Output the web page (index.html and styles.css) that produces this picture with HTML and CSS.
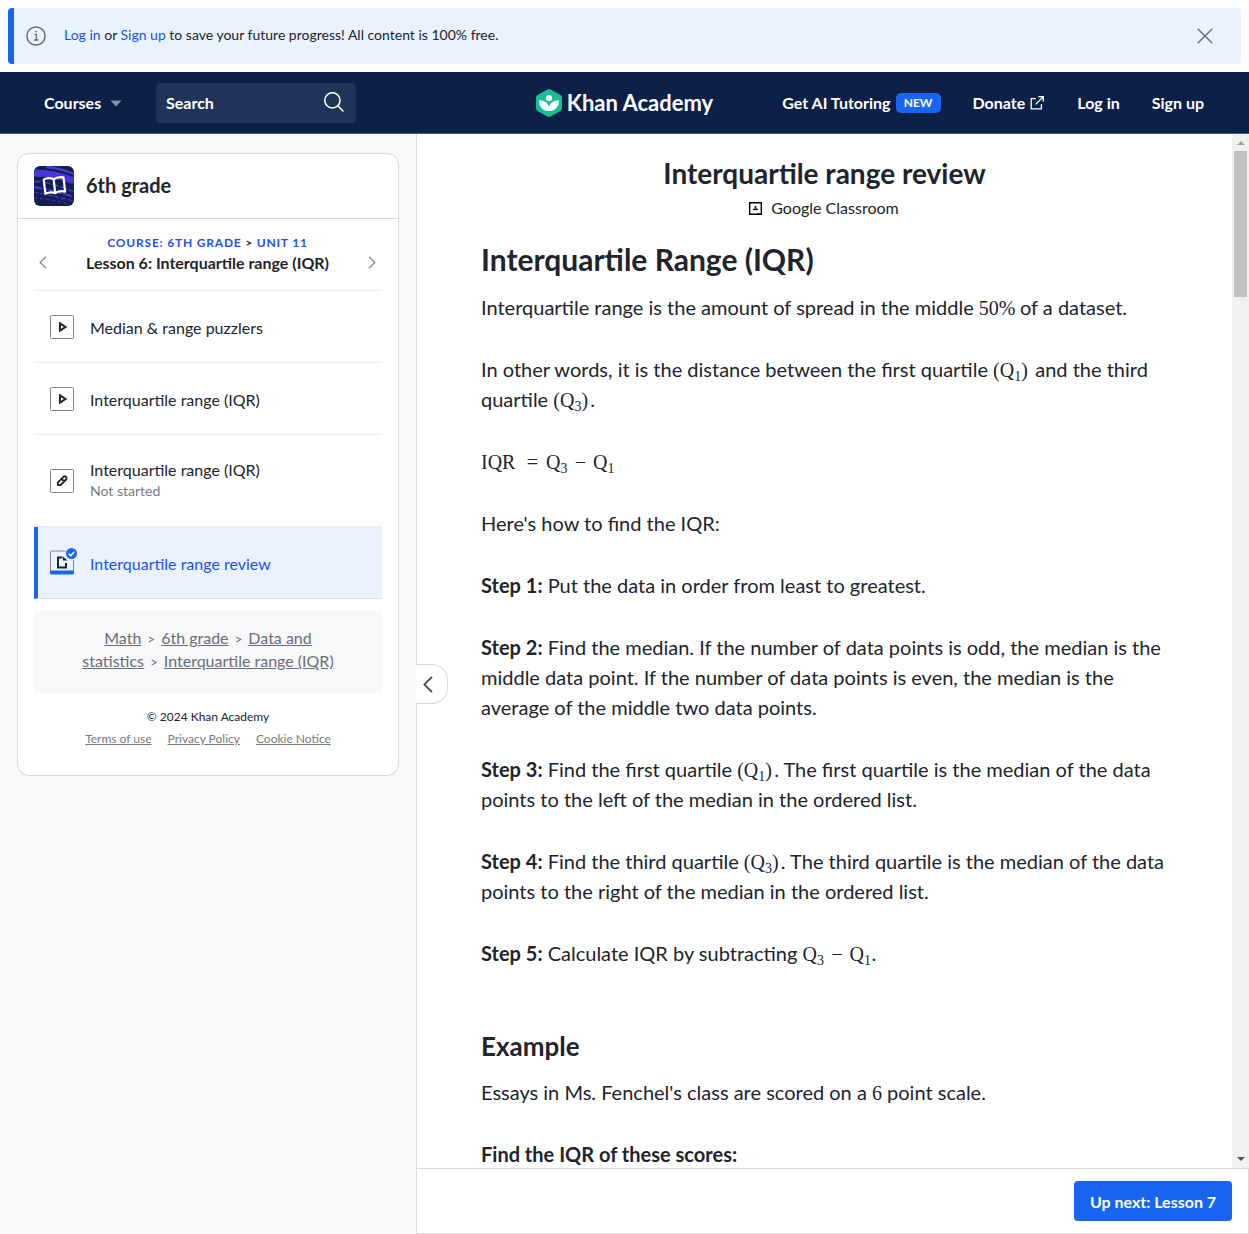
FILE: index.html
```html
<!DOCTYPE html>
<html lang="en">
<head>
<meta charset="utf-8">
<title>Interquartile range review | Khan Academy</title>
<link rel="stylesheet" href="styles.css">
</head>
<body>
<div class="banner">
  <svg class="info" width="20" height="20" viewBox="0 0 20 20" fill="none" stroke="#6b6d76" stroke-width="1.5"><circle cx="10" cy="10" r="9.1"/><path d="M8.4 8.3h1.9v5.6M8 14h4.4" stroke-width="1.3"/><circle cx="10" cy="5.6" r=".9" fill="#6b6d76" stroke="none"/></svg>
  <p class="banner-text"><a>Log in</a> or <a>Sign up</a> to save your future progress! All content is 100% free.</p>
  <svg width="16" height="16" viewBox="0 0 16 16" fill="none" stroke="#6b6d76" stroke-width="1.4"><path d="M.7.7l14.600 14.600M15.300.7L.7 15.300"/></svg>
</div>
<header class="nav">
  <div class="nav-left">
    <span class="courses">Courses</span>
    <svg class="caret" width="12" height="7" viewBox="0 0 12 7"><path d="M.3.4h11.400L6 6.600z" fill="#848da1"/></svg>
    <div class="search"><span>Search</span>
      <svg width="20" height="20" viewBox="0 0 20 20" fill="none" stroke="#fff" stroke-width="1.5"><circle cx="8.400" cy="8.400" r="7.600"/><path d="M13.900 13.900l5.600 5.600"/></svg>
    </div>
  </div>
  <div class="logo">
    <svg width="26" height="28" viewBox="0 0 26 28"><path d="M11.300.5q1.700-.9 3.400 0l9.800 5.600q1.500.9 1.500 2.600v10.600q0 1.700-1.500 2.600l-9.800 5.600q-1.700.9-3.400 0L1.500 21.900Q0 21 0 19.300V8.700Q0 7 1.500 6.100z" fill="#14bf96"/><circle cx="13" cy="9" r="3.100" fill="#fff"/><path d="M3 11.200c5.600.2 9.300 3 10 6.900.7-3.900 4.400-6.700 10-6.900.2 6.600-4 10.700-9.300 10.700h-1.400C7 21.900 2.800 17.800 3 11.200z" fill="#fff"/></svg>
    <span>Khan Academy</span>
  </div>
  <nav class="nav-right">
    <a class="tutor">Get AI Tutoring</a><span class="new">NEW</span>
    <a class="donate">Donate</a>
    <svg class="ext" width="14" height="14" viewBox="0 0 14 14" fill="none" stroke="#fff" stroke-width="1.3"><path d="M6 2.600H1.200v10.200h10.200V8M8.300.7h5v5M13.200.8L5.600 8.400"/></svg>
    <a class="login">Log in</a><a>Sign up</a>
  </nav>
</header>
<div class="page">
  <aside class="sidebar">
    <div class="card">
      <div class="card-head">
        <svg width="40" height="40" viewBox="0 0 40 40"><defs><clipPath id="tile"><rect width="40" height="40" rx="6"/></clipPath></defs><g clip-path="url(#tile)"><path fill="#11204f" d="M0 0h40v40H0z"/><g stroke="#4a35dd" fill="none"><path d="M0 7q20 0 40 8" stroke-width="7"/><path d="M12 1q14 1 28 7" stroke-width="2.500"/><path d="M0 16q12-2 40 10" stroke-width="1.500" stroke-dasharray="7 2"/><path d="M0 21q18 3 40 10" stroke-width="2" stroke-dasharray="9 2 3 1"/><path d="M0 26q16 3 40 9" stroke-width="1.200" stroke-dasharray="5 2"/><path d="M0 32q18 1 34 6" stroke-width="1" stroke-dasharray="3 3"/></g><path d="M19.700 14q-4.500-2.500-10 .2l1.700 14.200q4.800-2.400 9.800-.7 4.200-2.800 9.900-1.500L29.500 12q-5.800-1.200-9.800 2l1.500 13.700" transform="translate(0 -.6)" fill="none" stroke="#fff" stroke-width="2.200" stroke-linejoin="round"/></g></svg>
        <h2>6th grade</h2>
      </div>
      <div class="lesson">
        <svg width="8" height="13" viewBox="0 0 8 13" fill="none" stroke="#909196" stroke-width="1.500"><path d="M7 .7L1.200 6.500 7 12.300"/></svg>
        <div class="lesson-text">
          <p class="crumb"><a>COURSE: 6TH GRADE</a> &gt; <a>UNIT 11</a></p>
          <h3>Lesson 6: Interquartile range (IQR)</h3>
        </div>
        <svg width="8" height="13" viewBox="0 0 8 13" fill="none" stroke="#909196" stroke-width="1.500"><path d="M1 .7l5.800 5.800L1 12.300"/></svg>
      </div>
      <ul class="items">
        <li class="item">
          <svg class="ico" width="24" height="24" viewBox="0 0 24 24"><rect x=".5" y=".5" width="23" height="23" rx="1" fill="#fff" stroke="#83858b"/><path d="M10 8.300l5.500 3.700-5.500 3.700z" fill="none" stroke="#21242c" stroke-width="2"/></svg>
          <span>Median &amp; range puzzlers</span></li>
        <li class="item">
          <svg class="ico" width="24" height="24" viewBox="0 0 24 24"><rect x=".5" y=".5" width="23" height="23" rx="1" fill="#fff" stroke="#83858b"/><path d="M10 8.300l5.500 3.700-5.500 3.700z" fill="none" stroke="#21242c" stroke-width="2"/></svg>
          <span>Interquartile range (IQR)</span></li>
        <li class="item tall">
          <svg class="ico" width="24" height="24" viewBox="0 0 24 24"><rect x=".5" y=".5" width="23" height="23" rx="1" fill="#fff" stroke="#83858b"/><path d="M7.900 16.100v-2.700l5.600-5.600q1.300-1 2.500.1t.1 2.600l-5.600 5.600zM11.600 9.800l2.600 2.600" fill="none" stroke="#21242c" stroke-width="1.900" stroke-linejoin="round"/></svg>
          <div><span>Interquartile range (IQR)</span><small>Not started</small></div></li>
        <li class="item current">
          <svg class="ico" width="28" height="28" viewBox="0 0 28 28"><path d="M.5 25V5q0-1 1-1H23.500v20" fill="none" stroke="#83858b"/><path d="M0 23.500h24V26q0 1.500-1.500 1.500h-21Q0 27.500 0 26z" fill="#1865f2"/><path d="M12.500 10.500H8v10h8v-4.500" fill="none" stroke="#21242c" stroke-width="2"/><path d="M13 9.500l4.500 4h-4.500z" fill="#21242c"/><circle cx="21.500" cy="6.500" r="6.700" fill="#ebf2ff"/><circle cx="21.500" cy="6.500" r="5.500" fill="#1865f2"/><path d="M18.700 6.700l2 2 3.600-4" fill="none" stroke="#fff" stroke-width="1.600"/></svg>
          <span>Interquartile range review</span></li>
      </ul>
      <div class="trail"><a>Math</a> <i>&gt;</i> <a>6th grade</a> <i>&gt;</i> <a>Data and<br>statistics</a> <i>&gt;</i> <a>Interquartile range (IQR)</a></div>
      <p class="copy">© 2024 Khan Academy</p>
      <div class="legal"><a>Terms of use</a><a>Privacy Policy</a><a>Cookie Notice</a></div>
    </div>
  </aside>
  <main class="main">
    <button class="collapse" aria-label="Collapse sidebar"><svg width="10" height="17" viewBox="0 0 10 17" fill="none" stroke="#3b3e45" stroke-width="1.700"><path d="M9 .8L1.400 8.500 9 16.200"/></svg></button>
    <div class="content">
      <article class="scroll">
        <h1>Interquartile range review</h1>
        <div class="classroom"><svg width="13" height="13" viewBox="0 0 13 13"><path d="M.7.7h11.600v11.600H.7z" fill="none" stroke="#000" stroke-width="1.400"/><path d="M4 8V7q2.500-1.500 5 0v1zM8 11h2.500v.8H8z"/><circle cx="6.500" cy="5" r="1"/></svg><span>Google Classroom</span></div>
        <h2 class="iqr">Interquartile Range (IQR)</h2>
        <p>Interquartile range is the amount of spread in the middle <span class="m num50">50%</span> of a dataset.</p>
        <p>In other words, it is the distance between the first quartile <span class="m pq">(Q<sub>1</sub>)</span> and the third<br>quartile <span class="m pq">(Q<sub>3</sub>)</span>.</p>
        <p><span class="m iq">IQR</span><span class="m op">=</span><span class="m q">Q<sub>3</sub></span><span class="m op2">−</span><span class="m q">Q<sub>1</sub></span></p>
        <p>Here's how to find the IQR:</p>
        <p><b>Step 1:</b> Put the data in order from least to greatest.</p>
        <p><b>Step 2:</b> Find the median. If the number of data points is odd, the median is the<br>middle data point. If the number of data points is even, the median is the<br>average of the middle two data points.</p>
        <p><b>Step 3:</b> Find the first quartile <span class="m pq">(Q<sub>1</sub>)</span>. The first quartile is the median of the data<br>points to the left of the median in the ordered list.</p>
        <p><b>Step 4:</b> Find the third quartile <span class="m pq">(Q<sub>3</sub>)</span>. The third quartile is the median of the data<br>points to the right of the median in the ordered list.</p>
        <p><b>Step 5:</b> Calculate IQR by subtracting <span class="m q">Q<sub>3</sub></span><span class="m op2">−</span><span class="m q">Q<sub>1</sub></span>.</p>
        <h2 class="example">Example</h2>
        <p>Essays in Ms. Fenchel's class are scored on a <span class="m">6</span> point scale.</p>
        <p><b>Find the IQR of these scores:</b></p>
      </article>
      <div class="bar"><i class="up"></i><i class="thumb"></i><i class="down"></i></div>
    </div>
    <footer class="foot"><button class="next">Up next: Lesson 7</button></footer>
  </main>
</div>
</body>
</html>
```
FILE: styles.css
```css
* { box-sizing: border-box; }
body { margin: 0; height: 1234px; overflow: hidden; display: flex; flex-direction: column; font-family: Lato, "Liberation Sans", sans-serif; color: #21242c; background: #fff; }
h1, h2, h3, p, ul { margin: 0; padding: 0; }
svg { display: block; flex: none; }
button { font: inherit; padding: 0; }

.banner { flex: none; display: flex; align-items: center; height: 56px; margin: 8px; padding: 0 28px 0 12px; border-left: 6px solid #1865f2; border-radius: 4px; background: #ebf2ff; }
.banner-text { flex: 1; margin-left: 18px; font-size: 14px; line-height: 20px; padding-bottom: 2px; }
.banner-text a, .crumb a { color: #1b50f5; }

.nav { flex: none; display: grid; grid-template-columns: 1fr auto 1fr; align-items: center; height: 62px; background: #0c2048; border-bottom: 1px solid #4a5878; color: #fff; font-size: 16px; font-weight: 700; }
.nav-left, .nav-right, .logo { display: flex; align-items: center; }
.nav-left { padding-left: 44px; }
.courses { width: 58px; }
.caret { margin: 2px 34px 0 8px; }
.search { display: flex; justify-content: space-between; align-items: center; width: 200px; height: 40px; padding: 0 12px 1px 10px; border-radius: 4px; background: #203358; }
.logo { gap: 5px; font-size: 22px; }
.nav-right { justify-content: flex-end; padding: 0 45px 1px 0; }
.new { margin: 1px 32px 0 5px; width: 45px; height: 20px; line-height: 20px; text-align: center; border-radius: 5px; background: #1865f2; font-size: 12px; }
.ext { margin: 1px 33px 0 5px; }
.login { margin-right: 32px; }

.page { flex: 1; min-height: 0; display: flex; }
.sidebar { width: 416px; flex: none; background: #f7f8fa; padding: 19px 17px; }
.card { height: 623px; background: #fff; border: 1px solid #d9dadc; border-radius: 12px; }
.card-head { display: flex; align-items: center; gap: 12px; height: 65px; padding: 0 16px; border-bottom: 1px solid #d9dadc; }
.card-head h2 { font-size: 20px; line-height: 24px; padding-bottom: 2px; }
.lesson { display: flex; align-items: center; justify-content: space-between; height: 72px; margin: 0 16px; padding: 17px 6px 0 5px; border-bottom: 1px solid #e9eaec; }
.lesson svg { margin-bottom: 1px; }
.lesson-text { text-align: center; padding-bottom: 18px; }
.crumb { font-size: 12px; line-height: 16px; letter-spacing: .8px; font-weight: 700; }
.lesson h3 { font-size: 16px; line-height: 20px; padding-top: 2px; }
.items { list-style: none; margin: 0 16px; }
.item { display: flex; align-items: center; height: 72px; padding-left: 16px; gap: 16px; font-size: 16px; line-height: 20px; border-bottom: 1px solid #e9eaec; }
.item > span { padding-top: 2px; }
.tall { height: 92px; }
.tall small { display: block; font-size: 14px; line-height: 20px; color: #77797f; margin-top: 1px; }
.current { padding-left: 12px; gap: 12px; border-left: 4px solid #1865f2; background: #ebf2ff; color: #1b50f5; border-bottom-color: #d5dcea; }
.current .ico { margin-bottom: 4px; }
.trail { margin: 12px 16px 0; height: 82px; padding-top: 16px; border-radius: 4px; background: #f7f8fa; text-align: center; font-size: 16px; line-height: 21px; color: #6b6d75; }
.trail a, .legal a { text-decoration: underline; }
.trail i { font-style: normal; font-size: 13px; margin: 0 2px; }
.copy { margin-top: 16px; text-align: center; font-size: 12px; line-height: 16px; }
.legal { display: flex; justify-content: center; gap: 16px; margin-top: 6px; font-size: 12px; line-height: 16px; color: #77797f; }

.main { position: relative; flex: 1; min-width: 0; display: flex; flex-direction: column; border-left: 1px solid #d9dadc; }
.collapse { position: absolute; left: -1px; top: 530px; width: 32px; height: 40px; display: flex; align-items: center; padding-left: 7px; border: 1px solid #d9dadc; border-left: 0; border-radius: 0 16px 16px 0; background: #fff; }
.content { flex: 1; min-height: 0; display: flex; }
.scroll { flex: 1; overflow: hidden; padding: 20px 64px 0; white-space: nowrap; }
.scroll h1 { font-size: 28px; line-height: 38px; text-align: center; }
.classroom { display: flex; justify-content: center; align-items: center; gap: 9px; margin-top: 6px; font-size: 16px; line-height: 20px; padding-right: 1px; }
.iqr { font-size: 30px; line-height: 36px; margin: 23px 0 15px; }
.scroll p { font-size: 20px; line-height: 30px; height: auto; margin-bottom: 32px; }
.example { font-size: 26px; line-height: 32px; margin: 62px 0 15px; }
.m { display: inline-block; font-family: "Liberation Serif", serif; font-size: 20px; line-height: 20px; }
.m sub { font-size: 14px; line-height: 0; vertical-align: -4px; }
.num50 { width: 36px; }
.pq { width: 37px; }
.iq { width: 38px; }
.q { width: 22px; }
.op { width: 27px; text-align: center; }
.op2 { width: 25px; text-align: center; }
.bar { width: 17px; flex: none; background: #f1f1f1; display: flex; flex-direction: column; align-items: center; }
.up { margin-top: 7px; border: 4px solid transparent; border-top: 0; border-bottom-color: #a3a3a3; }
.thumb { width: 13px; height: 146px; margin-top: 6px; background: #c1c1c1; }
.down { margin: auto 0 7px; border: 4px solid transparent; border-bottom: 0; border-top-color: #505050; }
.foot { flex: none; display: flex; justify-content: flex-end; height: 66px; padding: 12px 16px 0; border: solid #d9dadc; border-width: 1px 1px 1px 0; }
.next { width: 158px; height: 40px; border: 0; border-radius: 4px; background: #1865f2; color: #fff; font-size: 16px; font-weight: 700; }
```
